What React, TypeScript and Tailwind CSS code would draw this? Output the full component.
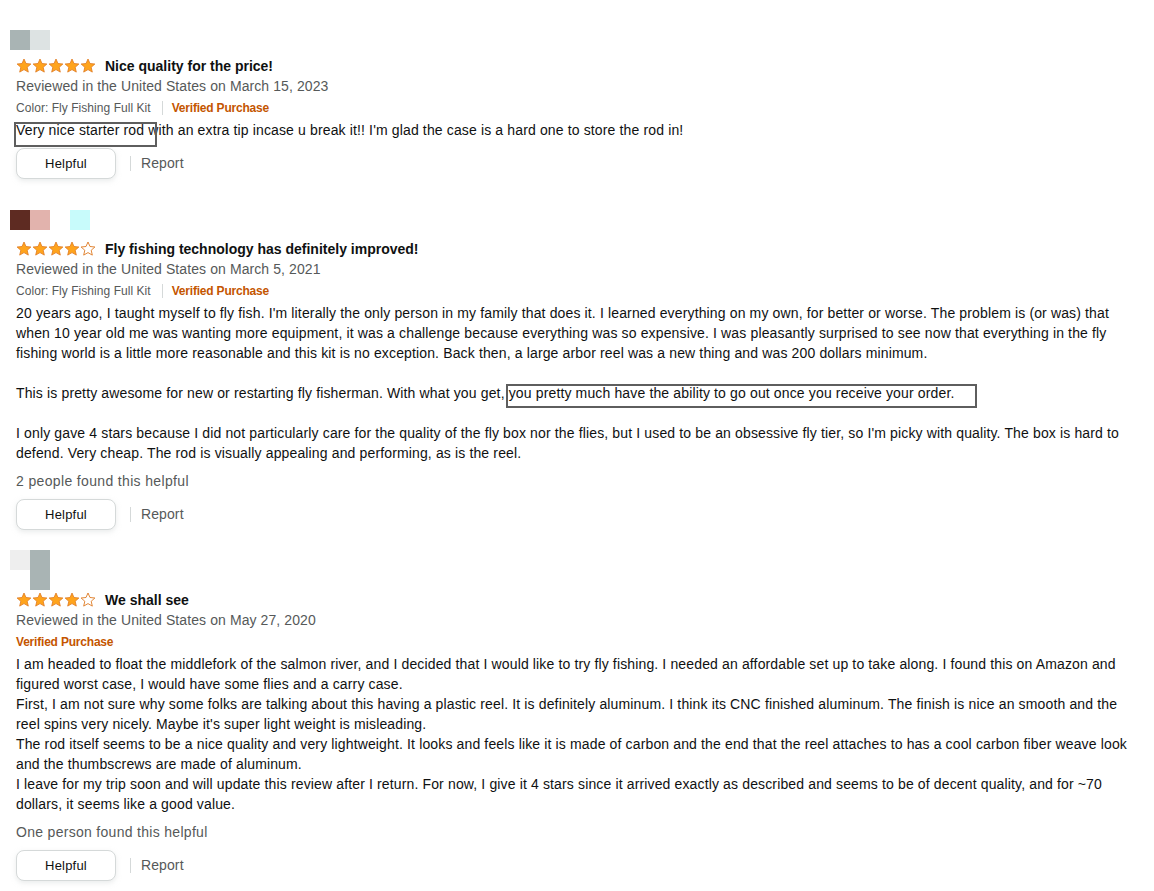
import React from "react";

const FONT = { fontFamily: '"Liberation Sans", Arial, sans-serif' };

function Star({ filled, x }: { filled: boolean; x: number }) {
  return (
    <path
      transform={`translate(${x},0)`}
      d="M8 1 L10 5.5 L14.9 6 L11.2 9.25 L12.3 14.1 L8 11.6 L3.7 14.1 L4.8 9.25 L1.1 6 L6 5.5 Z"
      fill={filled ? "#FFA41C" : "#ffffff"}
      stroke="#DE7921"
      strokeWidth={filled ? 0.8 : 0.9}
      strokeLinejoin="round"
    />
  );
}

function Stars({ n }: { n: number }) {
  return (
    <svg width="80" height="16" viewBox="0 0 80 16" className="shrink-0">
      {[0, 1, 2, 3, 4].map((i) => (
        <Star key={i} filled={i < n} x={i * 16} />
      ))}
    </svg>
  );
}

function Actions({ mt }: { mt: string }) {
  return (
    <div className={`flex items-center ${mt}`}>
      <button className="w-[100px] h-[31px] rounded-lg border border-[#d5d9d9] bg-white shadow-[0_2px_5px_0_rgba(213,217,217,0.5)] text-[13px] tracking-[0.2px] text-[#0f1111]">
        Helpful
      </button>
      <span className="ml-[14px] w-px h-[15px] bg-[#d5d9d9]" />
      <span className="ml-[10px] text-[14px] tracking-[0.1px] text-[#565959]">Report</span>
    </div>
  );
}

function Header({
  stars,
  title,
  date,
  color,
  titleMt,
}: {
  stars: number;
  title: string;
  date: string;
  color: boolean;
  titleMt: string;
}) {
  return (
    <>
      <div className={`flex items-center h-[20px] ${titleMt}`}>
        <Stars n={stars} />
        <span className="ml-[9px] text-[14px] font-bold text-[#0f1111]">{title}</span>
      </div>
      <div className="h-[20px] leading-[20px] text-[14px] tracking-[0.09px] text-[#565959]">
        Reviewed in the United States on {date}
      </div>
      <div className="mt-[2px] h-[20px] flex items-center text-[12px]">
        {color && (
          <>
            <span className="text-[#565959] tracking-[0.05px]">Color: Fly Fishing Full Kit</span>
            <span className="ml-[11px] mr-[9px] w-px h-[14px] bg-[#d5d9d9]" />
          </>
        )}
        <span className="font-bold text-[#c45500] tracking-[-0.2px]">Verified Purchase</span>
      </div>
    </>
  );
}

const BODY = "mt-[2px] text-[14px] leading-[20px] tracking-[0.14px] text-[#0f1111]";

export default function App() {
  return (
    <div className="w-[1154px] min-h-[891px] bg-white pl-4 pr-[14px] pt-[30px] pb-2" style={FONT}>
      {/* Review 1 */}
      <div>
        <div className="flex -ml-[6px]">
          <div className="w-[20px] h-[20px] bg-[#a9b4b4]" />
          <div className="w-[20px] h-[20px] bg-[#dde3e3]" />
        </div>
        <Header
          stars={5}
          title="Nice quality for the price!"
          date="March 15, 2023"
          color
          titleMt="mt-[6px]"
        />
        <div className={`relative ${BODY}`}>
          Very nice starter rod with an extra tip incase u break it!! I'm glad the case is a hard one to store the rod in!
          <span className="absolute left-[-2px] top-[2px] w-[143px] h-[25px] border-2 border-[#5e5e5e] pointer-events-none" />
        </div>
        <Actions mt="mt-[8px]" />
      </div>

      {/* Review 2 */}
      <div className="mt-[31px]">
        <div className="flex -ml-[6px]">
          <div className="w-[20px] h-[20px] bg-[#5e2b22]" />
          <div className="w-[20px] h-[20px] bg-[#e2b3ad]" />
          <div className="ml-[20px] w-[20px] h-[20px] bg-[#c8fbfb]" />
        </div>
        <Header
          stars={4}
          title="Fly fishing technology has definitely improved!"
          date="March 5, 2021"
          color
          titleMt="mt-[9px]"
        />
        <div className={BODY}>
          <p>
            20 years ago, I taught myself to fly fish. I'm literally the only person in my family that does it. I learned everything on my own, for better or worse. The problem is (or was) that when 10 year old me was wanting more equipment, it was a challenge because everything was so expensive. I was pleasantly surprised to see now that everything in the fly fishing world is a little more reasonable and this kit is no exception. Back then, a large arbor reel was a new thing and was 200 dollars minimum.
          </p>
          <p className="mt-[20px]">
            This is pretty awesome for new or restarting fly fisherman. With what you get,{" "}
            <span className="relative">
              you pretty much have the ability to go out once you receive your order.
              <span className="absolute left-[-3px] top-[-1px] right-[-23px] bottom-[-7px] border-2 border-[#5e5e5e] pointer-events-none" />
            </span>
          </p>
          <p className="mt-[20px]">
            I only gave 4 stars because I did not particularly care for the quality of the fly box nor the flies, but I used to be an obsessive fly tier, so I'm picky with quality. The box is hard to defend. Very cheap. The rod is visually appealing and performing, as is the reel.
          </p>
        </div>
        <div className="mt-[8px] text-[14px] leading-[20px] tracking-[0.35px] text-[#565959]">2 people found this helpful</div>
        <Actions mt="mt-[8px]" />
      </div>

      {/* Review 3 */}
      <div className="mt-[20px]">
        <div className="flex items-start -ml-[6px]">
          <div className="w-[20px] h-[20px] bg-[#eeeeee]" />
          <div className="w-[20px] h-[40px] bg-[#a9b4b4]" />
        </div>
        <Header
          stars={4}
          title="We shall see"
          date="May 27, 2020"
          color={false}
          titleMt="mt-0"
        />
        <div className={BODY}>
          I am headed to float the middlefork of the salmon river, and I decided that I would like to try fly fishing. I needed an affordable set up to take along. I found this on Amazon and figured worst case, I would have some flies and a carry case.
          <br />
          First, I am not sure why some folks are talking about this having a plastic reel. It is definitely aluminum. I think its CNC finished aluminum. The finish is nice an smooth and the reel spins very nicely. Maybe it's super light weight is misleading.
          <br />
          The rod itself seems to be a nice quality and very lightweight. It looks and feels like it is made of carbon and the end that the reel attaches to has a cool carbon fiber weave look and the thumbscrews are made of aluminum.
          <br />
          I leave for my trip soon and will update this review after I return. For now, I give it 4 stars since it arrived exactly as described and seems to be of decent quality, and for ~70 dollars, it seems like a good value.
        </div>
        <div className="mt-[8px] text-[14px] leading-[20px] tracking-[0.3px] text-[#565959]">One person found this helpful</div>
        <Actions mt="mt-[8px]" />
      </div>
    </div>
  );
}
